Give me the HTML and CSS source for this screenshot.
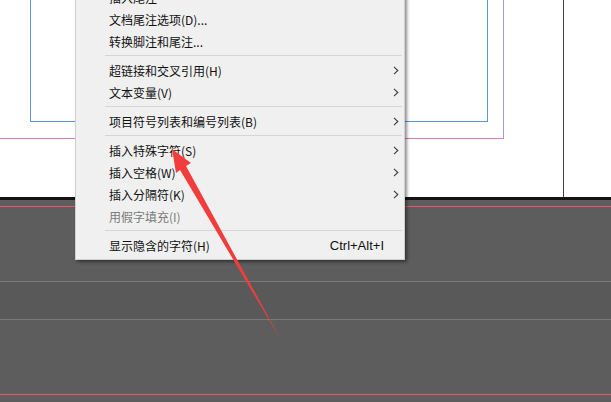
FILE: index.html
```html
<!DOCTYPE html>
<html lang="zh-CN">
<head>
    <meta charset="UTF-8">
    <title>文字菜单</title>
    <link rel="stylesheet" href="styles.css">
</head>
<body>
<div class="screen">
    <div class="canvas">
        <div class="guide-margin"></div>
        <div class="guide-column"></div>
        <div class="guide-bleed"></div>
    </div>
    <div class="pasteboard">
        <div class="edge-dark"></div>
        <div class="gap"></div>
        <div class="red-rule"></div>
        <div class="zone"></div>
        <div class="band"></div>
        <div class="zone zone-low"></div>
        <div class="red-rule"></div>
        <div class="rest"></div>
    </div>

    <div class="menu">
        <div class="item"><span class="label">插入尾注</span><span class="sub"></span></div>
        <div class="item"><span class="label">文档尾注选项(D)...</span><span class="sub"></span></div>
        <div class="item"><span class="label">转换脚注和尾注...</span><span class="sub"></span></div>
        <div class="sep"></div>
        <div class="item"><span class="label">超链接和交叉引用(H)</span><span class="sub"><svg width="6" height="9" viewBox="0 0 6 9"><path d="M1 0.8 L4.8 4.5 L1 8.2" fill="none" stroke="#3c3c3c" stroke-width="1.1"/></svg></span></div>
        <div class="item"><span class="label">文本变量(V)</span><span class="sub"><svg width="6" height="9" viewBox="0 0 6 9"><path d="M1 0.8 L4.8 4.5 L1 8.2" fill="none" stroke="#3c3c3c" stroke-width="1.1"/></svg></span></div>
        <div class="sep"></div>
        <div class="item"><span class="label">项目符号列表和编号列表(B)</span><span class="sub"><svg width="6" height="9" viewBox="0 0 6 9"><path d="M1 0.8 L4.8 4.5 L1 8.2" fill="none" stroke="#3c3c3c" stroke-width="1.1"/></svg></span></div>
        <div class="sep"></div>
        <div class="item"><span class="label">插入特殊字符(S)</span><span class="sub"><svg width="6" height="9" viewBox="0 0 6 9"><path d="M1 0.8 L4.8 4.5 L1 8.2" fill="none" stroke="#3c3c3c" stroke-width="1.1"/></svg></span></div>
        <div class="item"><span class="label">插入空格(W)</span><span class="sub"><svg width="6" height="9" viewBox="0 0 6 9"><path d="M1 0.8 L4.8 4.5 L1 8.2" fill="none" stroke="#3c3c3c" stroke-width="1.1"/></svg></span></div>
        <div class="item"><span class="label">插入分隔符(K)</span><span class="sub"><svg width="6" height="9" viewBox="0 0 6 9"><path d="M1 0.8 L4.8 4.5 L1 8.2" fill="none" stroke="#3c3c3c" stroke-width="1.1"/></svg></span></div>
        <div class="item disabled"><span class="label">用假字填充(I)</span><span class="sub"></span></div>
        <div class="sep"></div>
        <div class="item"><span class="label">显示隐含的字符(H)</span><span class="shortcut">Ctrl+Alt+I</span><span class="sub"></span></div>
    </div>

    <svg class="pointer" width="611" height="402" viewBox="0 0 611 402">
        <polygon points="172,149 191,163 186,166 281,340 180,170 176,173" fill="#f23d3d"/>
    </svg>
</div>
</body>
</html>
```

FILE: styles.css
```css
* {
    box-sizing: border-box;
    margin: 0;
    padding: 0;
}

body {
    background-color: #5d5d5d;
    font-family: "Noto Sans CJK SC", "Noto Sans", sans-serif;
}

.screen {
    position: relative;
    width: 611px;
    height: 402px;
    overflow: hidden;
}

/* page area */
.canvas {
    position: relative;
    height: 197px;
    background-color: #fff;
}

.guide-margin {
    position: absolute;
    left: 30px;
    top: -10px;
    width: 458px;
    height: 132px;
    border: 1px solid #5b94e6;
}

.guide-column {
    position: absolute;
    left: -10px;
    top: -10px;
    width: 514px;
    height: 149px;
    border-right: 1px solid #a597e6;
    border-bottom: 1px solid #d77cbc;
}

.guide-bleed {
    position: absolute;
    left: 563px;
    top: 0;
    width: 1px;
    height: 197px;
    background-color: #444;
}

/* pasteboard */
.edge-dark {
    height: 3px;
    background-color: #141414;
}

.gap {
    height: 6px;
    background-color: #5d5d5d;
}

.red-rule {
    height: 1px;
    background-color: #ee5466;
}

.zone {
    height: 75px;
    background-color: #5d5d5d;
    border-bottom: 1px solid #7a7a7a;
}

.band {
    height: 38px;
    background-color: #595959;
    border-bottom: 1px solid #7a7a7a;
}

.zone-low {
    height: 74px;
    border-bottom: none;
}

.rest {
    height: 10px;
    background-color: #5d5d5d;
}

/* context menu */
.menu {
    position: absolute;
    left: 75px;
    top: -18px;
    width: 330px;
    padding: 3px 0 3px;
    background-color: #f0f0f0;
    border: 1px solid #cfcfcf;
    box-shadow: 2px 2px 3px rgba(0,0,0,0.45);
}

.item {
    display: flex;
    align-items: center;
    height: 22px;
    padding-left: 33px;
    font-size: 12px;
    color: #111;
    white-space: nowrap;
}

.item.disabled {
    color: #7a7a7a;
}

.label {
    flex: 1;
}

.shortcut {
    font-family: "Liberation Sans", Arial, sans-serif;
    font-size: 13px;
}

.sub {
    display: flex;
    align-items: center;
    justify-content: center;
    width: 20px;
    height: 22px;
    padding-left: 3px;
}

.sep {
    height: 1px;
    margin: 3px 2px 3px 29px;
    background-color: #d5d5d5;
}

.pointer {
    position: absolute;
    left: 0;
    top: 0;
    pointer-events: none;
}
```
